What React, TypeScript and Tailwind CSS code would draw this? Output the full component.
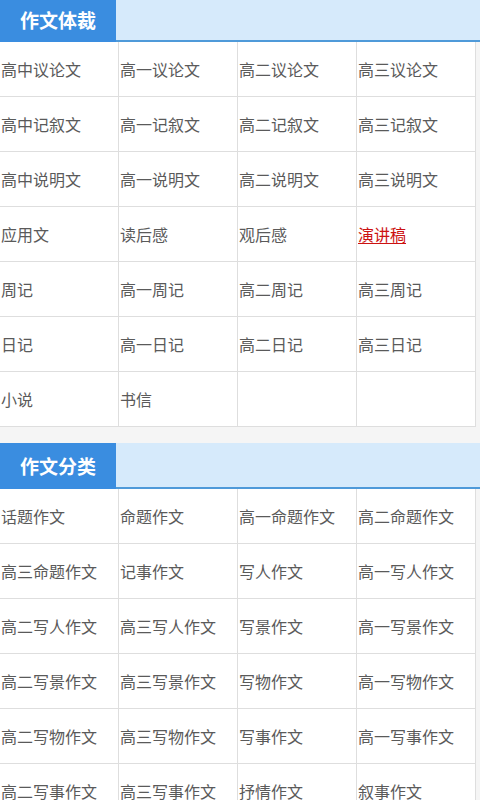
import React from "react";

const font = '"Noto Sans CJK SC", "Noto Sans", sans-serif';

type Item = { t: string; red?: boolean };

const sec1: Item[][] = [
  [{ t: "高中议论文" }, { t: "高一议论文" }, { t: "高二议论文" }, { t: "高三议论文" }],
  [{ t: "高中记叙文" }, { t: "高一记叙文" }, { t: "高二记叙文" }, { t: "高三记叙文" }],
  [{ t: "高中说明文" }, { t: "高一说明文" }, { t: "高二说明文" }, { t: "高三说明文" }],
  [{ t: "应用文" }, { t: "读后感" }, { t: "观后感" }, { t: "演讲稿", red: true }],
  [{ t: "周记" }, { t: "高一周记" }, { t: "高二周记" }, { t: "高三周记" }],
  [{ t: "日记" }, { t: "高一日记" }, { t: "高二日记" }, { t: "高三日记" }],
  [{ t: "小说" }, { t: "书信" }, { t: "" }, { t: "" }],
];

const sec2: Item[][] = [
  [{ t: "话题作文" }, { t: "命题作文" }, { t: "高一命题作文" }, { t: "高二命题作文" }],
  [{ t: "高三命题作文" }, { t: "记事作文" }, { t: "写人作文" }, { t: "高一写人作文" }],
  [{ t: "高二写人作文" }, { t: "高三写人作文" }, { t: "写景作文" }, { t: "高一写景作文" }],
  [{ t: "高二写景作文" }, { t: "高三写景作文" }, { t: "写物作文" }, { t: "高一写物作文" }],
  [{ t: "高二写物作文" }, { t: "高三写物作文" }, { t: "写事作文" }, { t: "高一写事作文" }],
  [{ t: "高二写事作文" }, { t: "高三写事作文" }, { t: "抒情作文" }, { t: "叙事作文" }],
];

function Header({ title, tall }: { title: string; tall?: boolean }) {
  return (
    <div className={`flex w-full ${tall ? "h-[46px]" : "h-[42px]"}`}>
      <div
        className={`w-[116px] bg-[#3a8de0] text-white font-bold text-[19px] flex justify-center ${
          tall ? "items-start pt-[9px]" : "items-center pb-[2px]"
        }`}
      >
        {title}
      </div>
      <div className="flex-1 bg-[#d6eafb] border-b-2 border-[#4f9ad9]" />
    </div>
  );
}

function Grid({ rows }: { rows: Item[][] }) {
  return (
    <div className="w-[476px] grid grid-cols-4 bg-white">
      {rows.flat().map((c, i) => (
        <div
          key={i}
          className="h-[55px] border-r border-b border-[#dedede] flex items-center pl-[1px] text-[16px] leading-none"
        >
          {c.red ? (
            <span className="text-[#cc1111] underline underline-offset-2">{c.t}</span>
          ) : (
            <span className="text-[#5a5a5a]">{c.t}</span>
          )}
        </div>
      ))}
    </div>
  );
}

export default function App() {
  return (
    <div className="w-[480px] h-[800px] overflow-hidden bg-[#f5f5f5]" style={{ fontFamily: font }}>
      <Header title="作文体裁" />
      <Grid rows={sec1} />
      <div className="h-[16px]" />
      <Header title="作文分类" tall />
      <Grid rows={sec2} />
    </div>
  );
}
